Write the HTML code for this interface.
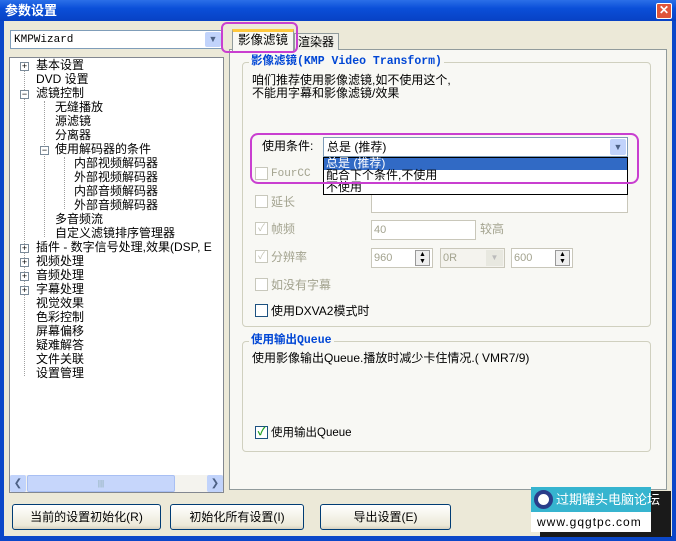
<!DOCTYPE html>
<html><head><meta charset="utf-8"><style>
*{margin:0;padding:0;box-sizing:border-box}
body{width:676px;height:541px;position:relative;overflow:hidden;background:#0b47c9;font-family:"Liberation Sans","Noto Sans CJK SC","WenQuanYi Zen Hei",sans-serif;font-size:12px;color:#000}
.a{position:absolute}
.t{position:absolute;white-space:nowrap;line-height:14px}
.title{left:0;top:0;width:676px;height:21px;background:linear-gradient(#2b6fe8,#0a4fd8 40%,#0841c4)}
.body{left:4px;top:21px;width:668px;height:515px;background:#ece9d8}
.box{position:absolute;background:#fff;border:1px solid #7f9db9}
.grp{position:absolute;border:1px solid #d0d0bf;border-radius:4px}
.gt{position:absolute;background:#f8f8f4;color:#0046d5;font-weight:bold;font-family:"Liberation Mono","Noto Sans CJK SC",monospace;font-size:11.5px;padding:0 2px;line-height:14px}
.cb{position:absolute;width:13px;height:13px;border:1px solid #c8c8bc;background:#fff}
.cb.on{border-color:#1c5180}
.g{color:#a3a38f}
.inp{position:absolute;border:1px solid #c9c7ba;background:#fff;color:#a3a38f;font-size:11px;padding-left:2px;line-height:18px}
.btn{position:absolute;height:26px;border:1px solid #003c74;border-radius:3px;background:linear-gradient(#fff,#ece9d8 85%,#d6d0c0);text-align:center;line-height:24px;font-size:12px}
.pm{position:absolute;width:9px;height:9px;border:1px solid #7a8a99;background:#fff;font-size:9px;line-height:7px;text-align:center;color:#000}
.dl{position:absolute;border-left:1px dotted #a0a0a0}
.dh{position:absolute;border-top:1px dotted #a0a0a0;height:0}
</style></head><body>
<div class="a title"></div>
<div class="t" style="left:5px;top:3px;color:#fff;font-weight:bold;font-size:13px;line-height:15px">参数设置</div>
<div class="a" style="left:656px;top:3px;width:16px;height:16px;background:#e0553a;border:1px solid #fff;border-radius:2px;color:#fff;font-size:12px;font-weight:bold;text-align:center;line-height:13px">✕</div>
<div class="a body"></div>

<!-- combo -->
<div class="box" style="left:10px;top:30px;width:213px;height:19px"></div>
<div class="t" style="left:14px;top:33px;font-family:'Liberation Mono',monospace;font-size:11px">KMPWizard</div>
<div class="a" style="left:205px;top:32px;width:16px;height:15px;background:#c1d3fb;border-radius:2px;color:#4d6185;font-size:9px;text-align:center;line-height:15px">▼</div>

<!-- tree -->
<div class="box" style="left:9px;top:57px;width:215px;height:436px;border-color:#828790"></div>
<div class="dl" style="left:24px;top:66px;height:310px"></div>
<div class="dl" style="left:44px;top:101px;height:136px"></div>
<div class="dl" style="left:64px;top:157px;height:52px"></div>
<div class="pm" style="left:20px;top:62px">+</div>
<div class="pm" style="left:20px;top:90px">−</div>
<div class="pm" style="left:40px;top:146px">−</div>
<div class="pm" style="left:20px;top:244px">+</div>
<div class="pm" style="left:20px;top:258px">+</div>
<div class="pm" style="left:20px;top:272px">+</div>
<div class="pm" style="left:20px;top:286px">+</div>
<div class="t" style="left:36px;top:58px">基本设置</div>
<div class="t" style="left:36px;top:72px">DVD 设置</div>
<div class="t" style="left:36px;top:86px">滤镜控制</div>
<div class="t" style="left:55px;top:100px">无缝播放</div>
<div class="t" style="left:55px;top:114px">源滤镜</div>
<div class="t" style="left:55px;top:128px">分离器</div>
<div class="t" style="left:55px;top:142px">使用解码器的条件</div>
<div class="t" style="left:74px;top:156px">内部视频解码器</div>
<div class="t" style="left:74px;top:170px">外部视频解码器</div>
<div class="t" style="left:74px;top:184px">内部音频解码器</div>
<div class="t" style="left:74px;top:198px">外部音频解码器</div>
<div class="t" style="left:55px;top:212px">多音频流</div>
<div class="t" style="left:55px;top:226px">自定义滤镜排序管理器</div>
<div class="t" style="left:36px;top:240px">插件 - 数字信号处理,效果(DSP, E</div>
<div class="t" style="left:36px;top:254px">视频处理</div>
<div class="t" style="left:36px;top:268px">音频处理</div>
<div class="t" style="left:36px;top:282px">字幕处理</div>
<div class="t" style="left:36px;top:296px">视觉效果</div>
<div class="t" style="left:36px;top:310px">色彩控制</div>
<div class="t" style="left:36px;top:324px">屏幕偏移</div>
<div class="t" style="left:36px;top:338px">疑难解答</div>
<div class="t" style="left:36px;top:352px">文件关联</div>
<div class="t" style="left:36px;top:366px">设置管理</div>
<!-- hscroll -->
<div class="a" style="left:10px;top:475px;width:213px;height:17px;background:#f4f3ee"></div>
<div class="a" style="left:10px;top:475px;width:16px;height:17px;background:#c1d3fb;border-radius:2px;color:#4d6185;text-align:center;line-height:17px;font-size:10px">❮</div>
<div class="a" style="left:27px;top:475px;width:148px;height:17px;background:#c6d6fb;border:1px solid #a8bff3;border-radius:2px;text-align:center;line-height:15px;font-size:8px;color:#8aa">|||</div>
<div class="a" style="left:207px;top:475px;width:16px;height:17px;background:#c1d3fb;border-radius:2px;color:#4d6185;text-align:center;line-height:17px;font-size:10px">❯</div>

<!-- tabs -->
<div class="a" style="left:229px;top:49px;width:438px;height:441px;background:#f8f8f4;border:1px solid #919b9c"></div>
<div class="a" style="left:294px;top:33px;width:45px;height:17px;background:#f0efe8;border:1px solid #919b9c;border-bottom:none"></div>
<div class="t" style="left:298px;top:35px">渲染器</div>
<div class="a" style="left:232px;top:29px;width:62px;height:22px;background:#f8f8f4;border:1px solid #919b9c;border-top:3px solid #ffc83c;border-bottom:none"></div>
<div class="t" style="left:238px;top:33px;font-size:12.5px">影像滤镜</div>
<div class="a" style="left:221px;top:22px;width:77px;height:31px;border:2px solid #c93fd0;border-radius:6px"></div>

<!-- group1 -->
<div class="grp" style="left:242px;top:62px;width:409px;height:265px"></div>
<div class="gt" style="left:249px;top:55px">影像滤镜(KMP Video Transform)</div>
<div class="t" style="left:252px;top:73px">咱们推荐使用影像滤镜,如不使用这个,</div>
<div class="t" style="left:252px;top:86px">不能用字幕和影像滤镜/效果</div>

<div class="t" style="left:262px;top:139px">使用条件:</div>
<div class="box" style="left:323px;top:137px;width:305px;height:20px"></div>
<div class="t" style="left:327px;top:140px">总是 (推荐)</div>
<div class="a" style="left:610px;top:139px;width:16px;height:16px;background:#c1d3fb;border-radius:2px;color:#4d6185;font-size:9px;text-align:center;line-height:16px">▼</div>

<div class="cb" style="left:255px;top:167px"></div>
<div class="t g" style="left:271px;top:167px;font-family:'Liberation Mono',monospace;font-size:11px">FourCC</div>

<div class="cb" style="left:255px;top:195px"></div>
<div class="t g" style="left:271px;top:195px">延长</div>
<div class="inp" style="left:371px;top:193px;width:257px;height:20px"></div>

<div class="cb" style="left:255px;top:222px;color:#c0c0b0;font-size:10px;line-height:11px;text-align:center">✓</div>
<div class="t g" style="left:271px;top:222px">帧频</div>
<div class="inp" style="left:371px;top:220px;width:105px;height:20px">40</div>
<div class="t g" style="left:480px;top:222px">较高</div>

<div class="cb" style="left:255px;top:250px;color:#c0c0b0;font-size:10px;line-height:11px;text-align:center">✓</div>
<div class="t g" style="left:271px;top:250px">分辨率</div>
<div class="inp" style="left:371px;top:248px;width:62px;height:20px">960</div>
<div class="a" style="left:415px;top:250px;width:15px;height:16px;border:1px solid #999;background:#eee;font-size:7px;line-height:7px;text-align:center">▲<br>▼</div>
<div class="inp" style="left:440px;top:248px;width:65px;height:20px;background:#f4f3ee">0R</div>
<div class="a" style="left:486px;top:250px;width:17px;height:16px;background:#e8e8e0;color:#bbb;font-size:8px;text-align:center;line-height:16px">▼</div>
<div class="inp" style="left:511px;top:248px;width:62px;height:20px">600</div>
<div class="a" style="left:555px;top:250px;width:15px;height:16px;border:1px solid #999;background:#eee;font-size:7px;line-height:7px;text-align:center">▲<br>▼</div>

<div class="cb" style="left:255px;top:278px"></div>
<div class="t g" style="left:271px;top:278px">如没有字幕</div>

<div class="cb" style="left:255px;top:304px;border-color:#1c5180"></div>
<div class="t" style="left:271px;top:304px">使用DXVA2模式时</div>

<!-- dropdown list -->
<div class="a" style="left:323px;top:157px;width:305px;height:38px;background:#fff;border:1px solid #000"></div>
<div class="a" style="left:324px;top:158px;width:303px;height:12px;background:#316ac5"></div>
<div class="t" style="left:326px;top:156px;color:#fff">总是 (推荐)</div>
<div class="t" style="left:326px;top:168px">配合下个条件,不使用</div>
<div class="t" style="left:326px;top:180px">不使用</div>
<div class="a" style="left:250px;top:133px;width:389px;height:51px;border:2px solid #c93fd0;border-radius:8px"></div>

<!-- group2 -->
<div class="grp" style="left:242px;top:341px;width:409px;height:111px"></div>
<div class="gt" style="left:249px;top:334px">使用输出Queue</div>
<div class="t" style="left:252px;top:351px">使用影像输出Queue.播放时减少卡住情况.( VMR7/9)</div>
<div class="cb on" style="left:255px;top:426px;color:#21a121;font-size:11px;line-height:11px;text-align:center;font-weight:bold">✓</div>
<div class="t" style="left:271px;top:426px;font-size:11.5px">使用输出Queue</div>

<!-- buttons -->
<div class="btn" style="left:12px;top:504px;width:149px">当前的设置初始化(R)</div>
<div class="btn" style="left:170px;top:504px;width:134px">初始化所有设置(I)</div>
<div class="btn" style="left:320px;top:504px;width:131px">导出设置(E)</div>

<!-- watermark -->
<div class="a" style="left:540px;top:491px;width:131px;height:46px;background:#1a1a1a"></div>
<div class="a" style="left:531px;top:487px;width:120px;height:25px;background:#36b4cf"></div>
<div class="a" style="left:534px;top:490px;width:19px;height:19px;border-radius:50%;background:#fff;border:4px solid #2a3d8a"></div>
<div class="t" style="left:556px;top:492px;color:#fff;font-size:13px;line-height:16px">过期罐头电脑论坛</div>
<div class="a" style="left:531px;top:512px;width:120px;height:20px;background:#fff"></div>
<div class="t" style="left:537px;top:515px;font-size:12px;letter-spacing:1px">www.gqgtpc.com</div>
</body></html>
